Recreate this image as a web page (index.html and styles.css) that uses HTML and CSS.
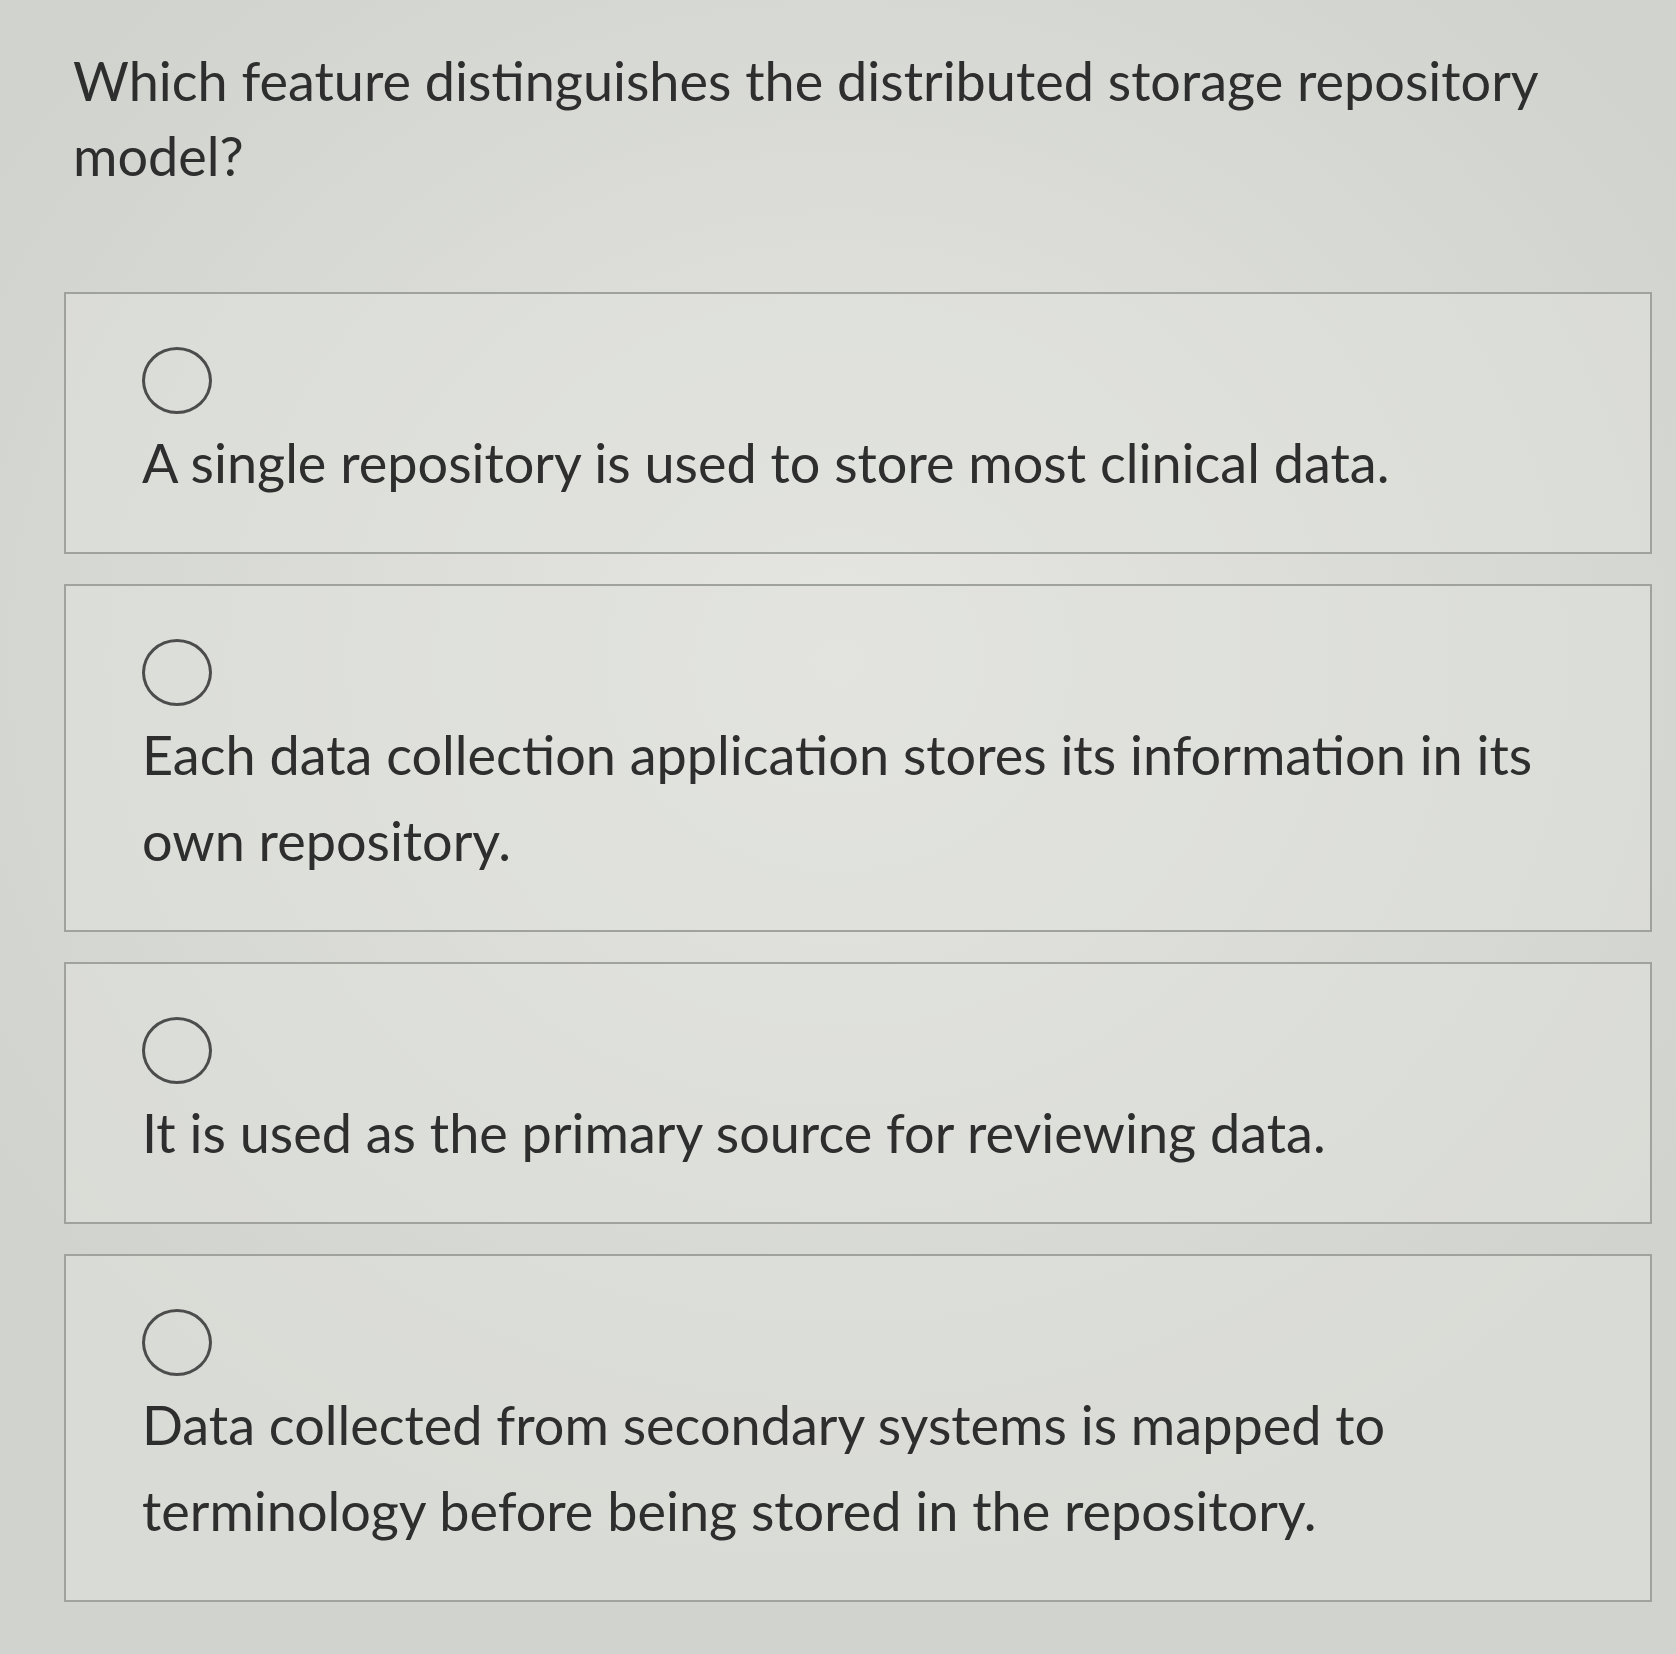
FILE: index.html
```html
<!DOCTYPE html>
<html lang="en">
<head>
<meta charset="utf-8">
<title>Question</title>
<link rel="stylesheet" href="styles.css">
</head>
<body>
<main class="page">
  <h1 class="question">Which feature distinguishes the distributed storage repository model?</h1>
  <div class="options">
    <label class="option">
      <span class="radio"></span>
      <span class="text">A single repository is used to store most clinical data.</span>
    </label>
    <label class="option">
      <span class="radio"></span>
      <span class="text">Each data collection application stores its information in its own repository.</span>
    </label>
    <label class="option">
      <span class="radio"></span>
      <span class="text">It is used as the primary source for reviewing data.</span>
    </label>
    <label class="option">
      <span class="radio"></span>
      <span class="text">Data collected from secondary systems is mapped to terminology before being stored in the repository.</span>
    </label>
  </div>
</main>
</body>
</html>
```
FILE: styles.css
```css
html, body {
  margin: 0;
  padding: 0;
}
body {
  width: 1676px;
  height: 1654px;
  overflow: hidden;
  background:
    radial-gradient(ellipse 60% 55% at 50% 40%, rgba(232,232,228,0.9), rgba(232,232,228,0) 100%),
    #d1d3ce;
  font-family: Lato, "Open Sans", sans-serif;
  color: #2e2e2e;
}
.page {
  padding: 43px 24px 0 64px;
}
.question {
  margin: 0 0 99px 9px;
  font-size: 54px;
  font-weight: 400;
  line-height: 75px;
  max-width: 1480px;
}
.options {
  display: flex;
  flex-direction: column;
  gap: 30px;
}
.option {
  display: flex;
  flex-direction: column;
  align-items: flex-start;
  gap: 6px;
  padding: 53px 75px 46px 76px;
  border: 2px solid #a0a29d;
  background: rgba(224,225,220,0.55);
}
.radio {
  width: 70px;
  height: 67px;
  border: 3px solid #4c4c4c;
  border-radius: 50%;
  box-sizing: border-box;
}
.text {
  font-size: 54px;
  line-height: 86px;
}
```
